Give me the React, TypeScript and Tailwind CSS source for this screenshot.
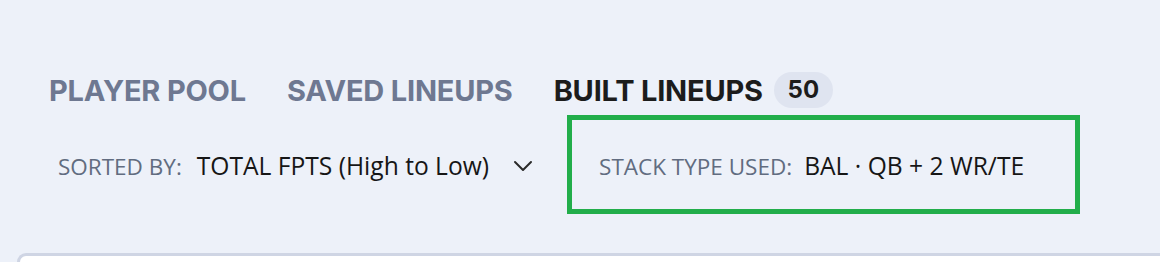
import React from 'react';

const tabs = [
  { label: 'PLAYER POOL', active: false },
  { label: 'SAVED LINEUPS', active: false },
  { label: 'BUILT LINEUPS', active: true, count: 50 },
];

export default function App() {
  return (
    <div className="h-[262px] overflow-hidden bg-[#edf1f9] flex flex-col">
      {/* tabs */}
      <div className="flex items-center gap-[41px] pl-[49px] pt-[72px] font-['Inter',sans-serif]">
        {tabs.map((tab) => (
          <div key={tab.label} className="flex items-center h-[36px] gap-[11px]">
            <span
              className={`text-[29px] font-bold leading-none tracking-[-0.2px] ${
                tab.active ? 'text-[#1c1c1c]' : 'text-[#6e7891]'
              }`}
            >
              {tab.label}
            </span>
            {tab.count !== undefined && (
              <span className="h-[36px] w-[59px] rounded-full bg-[#dfe4f0] flex items-center justify-center text-[24px] font-bold text-[#1c1c1c]">
                {tab.count}
              </span>
            )}
          </div>
        ))}
      </div>

      {/* sort + stack type */}
      <div className="flex items-center mt-[7px] pl-[58px] font-['Open_Sans',sans-serif]">
        <div className="flex items-center pt-[4px]">
          <span className="text-[22.5px] text-[#616c80]">SORTED BY:</span>
          <span className="ml-[15px] text-[24.6px] text-[#161616]">TOTAL FPTS (High to Low)</span>
          <svg
            className="ml-[24px] w-[20px] h-[12px]"
            viewBox="0 0 20 12"
            fill="none"
            stroke="#2a2a2a"
            strokeWidth="2"
            strokeLinecap="round"
            strokeLinejoin="round"
          >
            <path d="M2 2l8 8 8-8" />
          </svg>
        </div>
        <div className="ml-[34px] w-[513px] h-[99px] border-[5px] border-[#22ae4b] flex items-center pl-[27px] pt-[4px]">
          <span className="text-[22.5px] text-[#616c80]">STACK TYPE USED:</span>
          <span className="ml-[12px] text-[24.6px] text-[#161616]">BAL · QB + 2 WR/TE</span>
        </div>
      </div>

      {/* card top */}
      <div className="mt-[39px] ml-[17px] flex-1 bg-white border-t-[3px] border-l-[3px] border-[#cfd5e4] rounded-tl-[12px]" />
    </div>
  );
}
